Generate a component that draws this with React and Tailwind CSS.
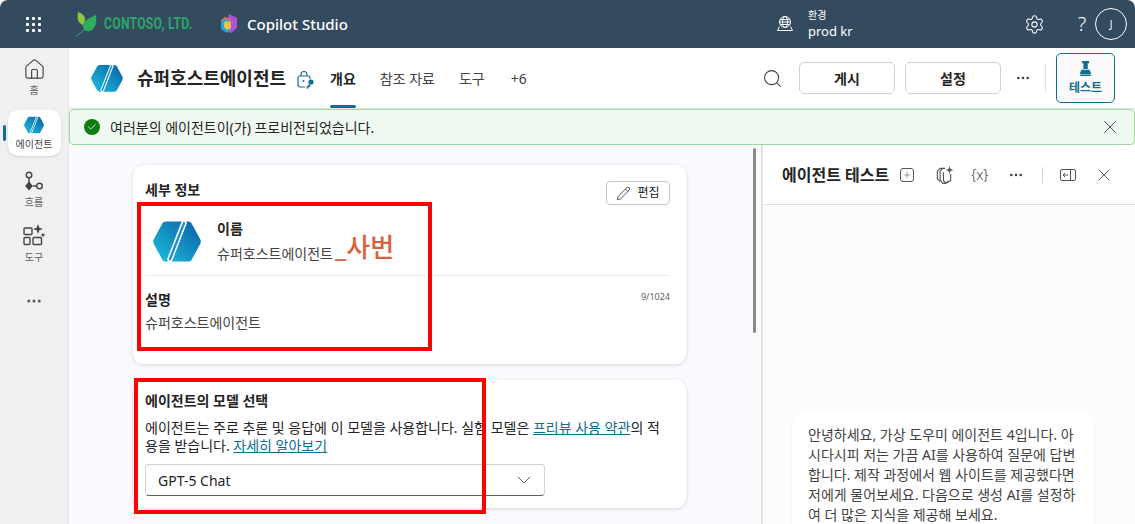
import React from 'react';
import { Home, Search, Settings, X, Plus, ChevronDown, Pencil, Check, MoreHorizontal } from 'lucide-react';

const fontStack = "font-['Noto_Sans','Noto_Sans_CJK_KR',sans-serif]";

const AgentLogo = ({ size = 32 }) => (
  <svg width={size} height={size * 0.9} viewBox="0 0 48 43">
    <defs>
      <linearGradient id="agentGrad" x1="0" y1="1" x2="1" y2="0">
        <stop offset="0" stopColor="#1cc0e0" />
        <stop offset="1" stopColor="#0a5fa6" />
      </linearGradient>
    </defs>
    <path d="M13 1.5h22c1.6 0 3 .8 3.8 2.2l8.4 15.5c.8 1.4.8 3.2 0 4.6l-8.4 15.5c-.8 1.4-2.2 2.2-3.8 2.2H13c-1.6 0-3-.8-3.8-2.2L.8 23.8c-.8-1.4-.8-3.2 0-4.6L9.2 3.7C10 2.3 11.4 1.5 13 1.5z" fill="url(#agentGrad)" />
    <path d="M31 3 17 39" stroke="#fff" strokeWidth="5.5" strokeLinecap="round" />
    <path d="M31 3 17 39" stroke="#1a8fc8" strokeWidth="2.4" strokeLinecap="round" />
  </svg>
);

const Leaf = () => (
  <svg width="22" height="25" viewBox="0 0 22 25">
    <path d="M2 8C1 5 2 2 2 0c3 1 7 3 7 7 0 2-1 4-2 6-3-1-4-3-5-5z" fill="#8dc63f" />
    <path d="M7 14C7 8 14 6 20 3c1 6 0 12-4 15-3 2-6 1-8 0z" fill="#2fae5f" />
    <path d="M0 24c4-2 9-7 14-13" stroke="#2fae5f" strokeWidth="1" fill="none" />
  </svg>
);

const CopilotLogo = () => (
  <svg width="18" height="20" viewBox="0 0 18 20">
    <path d="M9 0l8 4v10l-6 5-3-1V4z" fill="#b14fd6" />
    <path d="M5 3l6 2v9l-5 4-5-3V6z" fill="#f06a5a" />
    <path d="M1 7l6-2 4 3v7l-4 4-6-4z" fill="#1ea7e0" />
    <path d="M6 7l5 1v6l-4 2-3-3V9z" fill="#f3c23c" />
  </svg>
);

const FlowIcon = () => (
  <svg width="20" height="22" viewBox="0 0 20 22" fill="none" stroke="#444" strokeWidth="1.4">
    <circle cx="5" cy="4" r="2.8" />
    <path d="M5 7v5M9 15h4" />
    <path d="M5 11.5l3 3.5-3 3.5-3-3.5z" fill="#444" />
    <circle cx="15.5" cy="15" r="2.8" />
  </svg>
);

const ToolsIcon = () => (
  <svg width="23" height="25" viewBox="0 0 23 25" fill="none" stroke="#444" strokeWidth="1.4">
    <rect x="1" y="5" width="8" height="6.5" rx="1" />
    <rect x="1" y="14.5" width="6" height="7" rx="1" />
    <rect x="10" y="14.5" width="8.5" height="7" rx="1" />
    <path d="M15 1l1.3 3.7L20 6l-3.7 1.3L15 11l-1.3-3.7L10 6l3.7-1.3z" fill="#444" stroke="none" />
    <path d="M20 9.5l.7 1.8 1.8.7-1.8.7-.7 1.8-.7-1.8-1.8-.7 1.8-.7z" fill="#444" stroke="none" />
  </svg>
);

const EnvIcon = () => (
  <svg width="18" height="18" viewBox="0 0 18 18" fill="none" stroke="#fff" strokeWidth="1">
    <circle cx="9" cy="7" r="5.5" />
    <ellipse cx="9" cy="7" rx="2.5" ry="5.5" />
    <path d="M3.5 7h11M4.5 4.5h9M4.5 9.5h9" />
    <path d="M3.5 11.5L1.5 15.5h15l-2-4" />
  </svg>
);

const LockKey = () => (
  <svg width="18" height="20" viewBox="0 0 18 20" fill="none" stroke="#0f6c93" strokeWidth="1.2">
    <path d="M4 6V4.5a3 3 0 0 1 6 0V6" />
    <path d="M8 17H3a2 2 0 0 1-2-2V8a2 2 0 0 1 2-2h8a2 2 0 0 1 2 2v1" />
    <circle cx="6.5" cy="11" r="1" fill="#0f6c93" stroke="none" />
    <circle cx="14" cy="12" r="2.6" fill="#0f6c93" stroke="none" />
    <path d="M12.5 14l-3 3v1.5h2V17h1.2l1-1.5" fill="#0f6c93" stroke="none" />
  </svg>
);

const TestIcon = () => (
  <svg width="13" height="15" viewBox="0 0 14 17" fill="#0f6c93">
    <path d="M3 0h8v2.5H9.6V9h-5V2.5H3z" />
    <path d="M2.5 10h9l1.5 3v2H1v-2z" />
    <rect x="1" y="15.5" width="12" height="1.5" />
  </svg>
);

const ChatCopyIcon = () => (
  <svg width="20" height="20" viewBox="0 0 18 18" fill="none" stroke="#555" strokeWidth="1">
    <path d="M8 3H5.5L3 5.5v7L5.5 15" />
    <path d="M10 3H8L5.5 5.5v8L8 16.5h2l2.5-2" />
    <path d="M8.5 6.5V14l2 2.5 4.5-2.5V8" />
    <path d="M14 1l.9 2.6 2.6.9-2.6.9-.9 2.6-.9-2.6-2.6-.9 2.6-.9z" fill="#555" stroke="none" />
  </svg>
);

const PanelIcon = () => (
  <svg width="16" height="14" viewBox="0 0 16 14" fill="none" stroke="#555" strokeWidth="1">
    <rect x="0.5" y="1.5" width="15" height="11" rx="1.5" />
    <path d="M10.5 1.5v11M8 7H3M5 5L3 7l2 2" />
  </svg>
);

const NavItem = ({ icon, label }) => (
  <div className="flex flex-col items-center">
    {icon}
    <span className="text-[10px] leading-[14px] text-[#616161] mt-[2px]">{label}</span>
  </div>
);

const App = () => {
  return (
    <div className={`relative w-[1135px] h-[524px] overflow-hidden bg-white ${fontStack}`}>
      <div className="h-[48px] flex items-center text-white bg-[#344a5f] rounded-t-[8px] whitespace-nowrap">
        <div className="w-[67px] shrink-0 flex justify-center">
          <div className="grid grid-cols-3 gap-[3px]">
            {[0, 1, 2, 3, 4, 5, 6, 7, 8].map((i) => (
              <span key={i} className="w-[3px] h-[3px] bg-white rounded-[1px]" />
            ))}
          </div>
        </div>
        <div className="ml-[9px] shrink-0"><Leaf /></div>
        <div className="ml-[6px] w-[90px] shrink-0">
          <span className="block origin-left scale-x-[0.72] text-[17px] font-bold tracking-[0.3px] text-[#2aa76a] font-['Roboto',sans-serif]">CONTOSO, LTD.</span>
        </div>
        <div className="ml-[26px] shrink-0"><CopilotLogo /></div>
        <span className="ml-[9px] w-[103px] shrink-0 text-[15px] font-medium">Copilot Studio</span>
        <div className="ml-[426px] shrink-0"><EnvIcon /></div>
        <div className="ml-[14px] w-[60px] shrink-0 flex flex-col">
          <span className="text-[10px] leading-[14px]">환경</span>
          <span className="text-[13px] leading-[18px]">prod kr</span>
        </div>
        <Settings size={21} strokeWidth={1.2} className="ml-[156px] shrink-0" />
        <span className="ml-[30px] w-[14px] shrink-0 text-center text-[20px] font-light leading-none">?</span>
        <div className="ml-[6px] shrink-0 w-[32px] h-[32px] rounded-full border border-white flex items-center justify-center text-[10px]">J</div>
      </div>

      <div className="flex h-[476px] bg-white">
        <div className="w-[69px] shrink-0 bg-[#f0f0f0] border-r border-[#e3e3e3] flex flex-col items-center pt-[10px] relative">
          <NavItem icon={<Home size={23} strokeWidth={1.2} className="text-[#444]" />} label="홈" />
          <div className="mt-[13px] w-[53px] h-[46px] bg-white rounded-[10px] shadow-sm flex flex-col items-center justify-center">
            <AgentLogo size={20} />
            <span className="text-[10px] leading-[14px] text-[#424242] mt-[3px]">에이전트</span>
          </div>
          <span className="absolute left-[3px] top-[77px] w-[3px] h-[16px] rounded bg-[#0f6c93]" />
          <div className="mt-[15px]">
            <NavItem icon={<FlowIcon />} label="흐름" />
          </div>
          <div className="mt-[14px]">
            <NavItem icon={<ToolsIcon />} label="도구" />
          </div>
          <MoreHorizontal size={18} className="mt-[28px] text-[#555]" />
        </div>

        <div className="flex-1 flex flex-col min-w-0">
          <div className="h-[61px] shrink-0 flex items-center pl-[22px] pr-[20px] border-b border-[#e6e6e6] whitespace-nowrap">
            <AgentLogo size={32} />
            <span className="ml-[14px] text-[18px] font-semibold text-[#242424]">슈퍼호스트에이전트</span>
            <span className="ml-[11px] mt-[3px]"><LockKey /></span>
            <div className="ml-[15px] h-full flex items-center relative">
              <span className="text-[14px] font-bold text-[#242424]">개요</span>
              <span className="absolute left-0 right-0 bottom-0 h-[3px] rounded bg-[#0f6c93]" />
            </div>
            <span className="ml-[24px] text-[14px] text-[#424242]">참조 자료</span>
            <span className="ml-[24px] text-[14px] text-[#424242]">도구</span>
            <span className="ml-[26px] text-[14px] text-[#424242]">+6</span>
            <div className="ml-auto flex items-center">
              <Search size={21} strokeWidth={1.2} className="text-[#424242]" />
              <button className="ml-[16px] w-[96px] h-[32px] border border-[#d1d1d1] rounded-[5px] text-[14px] font-bold text-[#242424]">게시</button>
              <button className="ml-[10px] w-[96px] h-[32px] border border-[#d1d1d1] rounded-[5px] text-[14px] font-bold text-[#242424]">설정</button>
              <MoreHorizontal size={16} className="ml-[14px] text-[#424242]" />
              <span className="ml-[14px] w-px h-[28px] bg-[#e0e0e0]" />
              <button className="ml-[10px] w-[59px] h-[50px] border border-[#0f6c93] rounded-[5px] bg-[#fafafa] flex flex-col items-center justify-center">
                <TestIcon />
                <span className="text-[12px] leading-[15px] mt-[4px] font-bold text-[#0f6c93]">테스트</span>
              </button>
            </div>
          </div>

          <div className="h-[36px] shrink-0 flex items-center bg-[#f0f9f0] border border-[#9fd89f] rounded-[4px] pl-[14px] pr-[13px]">
            <span className="w-[16px] h-[16px] rounded-full bg-[#107c10] flex items-center justify-center">
              <Check size={10} strokeWidth={2} className="text-white" />
            </span>
            <span className="ml-[10px] text-[14px] text-[#242424]">여러분의 에이전트이(가) 프로비전되었습니다.</span>
            <X size={22} strokeWidth={1} className="ml-auto text-[#424242]" />
          </div>

          <div className="flex-1 flex min-h-0">
            <div className="w-[692px] shrink-0 bg-[#f9fafe] pl-[64px] pt-[20px] relative overflow-hidden">
              <div className="w-[553px] h-[199px] bg-white rounded-[10px] shadow-[0_1px_4px_rgba(0,0,0,0.14)] pl-[12px] pr-[16px] pt-[14px]">
                <div className="flex items-start justify-between">
                  <span className="text-[14px] leading-[22px] font-bold text-[#242424]">세부 정보</span>
                  <button className="w-[64px] h-[24px] border border-[#c8c8c8] rounded-[4px] flex items-center justify-center text-[12px] text-[#242424] mt-[2px]">
                    <Pencil size={15} strokeWidth={1.2} />
                    <span className="ml-[6px]">편집</span>
                  </button>
                </div>
                <div className="flex items-center h-[67px] border-b border-[#ececec] mt-[4px]">
                  <span className="ml-[8px]"><AgentLogo size={48} /></span>
                  <div className="ml-[16px] flex flex-col">
                    <span className="text-[14px] leading-[20px] font-bold text-[#242424]">이름</span>
                    <span className="text-[14px] leading-[22px] mt-[4px] text-[#424242]">슈퍼호스트에이전트</span>
                  </div>
                </div>
                <div className="flex justify-between pt-[14px]">
                  <span className="text-[14px] leading-[20px] font-bold text-[#242424]">설명</span>
                  <span className="text-[9px] text-[#616161]">9/1024</span>
                </div>
                <div className="text-[14px] leading-[20px] mt-[3px] text-[#424242]">슈퍼호스트에이전트</div>
              </div>

              <div className="w-[553px] h-[128px] mt-[16px] bg-white rounded-[10px] shadow-[0_1px_4px_rgba(0,0,0,0.14)] pl-[12px] pr-[16px] pt-[11px]">
                <div className="text-[14px] leading-[20px] font-bold text-[#242424]">에이전트의 모델 선택</div>
                <p className="mt-[8px] text-[14px] leading-[18px] text-[#242424]">
                  에이전트는 주로 추론 및 응답에 이 모델을 사용합니다. 실험 모델은 <a className="underline text-[#0f6c93]">프리뷰 사용 약관</a>의 적용을 받습니다. <a className="underline text-[#0f6c93]">자세히 알아보기</a>
                </p>
                <div className="mt-[9px] w-[400px] h-[32px] border border-[#d1d1d1] border-b-[#616161] rounded-[4px] flex items-center justify-between pl-[12px] pr-[8px]">
                  <span className="text-[14px] text-[#242424]">GPT-5 Chat</span>
                  <ChevronDown size={24} strokeWidth={1} className="text-[#616161]" />
                </div>
              </div>
              <span className="absolute right-[5px] top-[3px] w-[3px] h-[185px] rounded bg-[#8a8a8a]" />
            </div>

            <div className="flex-1 bg-white border-l-[2px] border-[#e3e3e3] flex flex-col min-w-0">
              <div className="h-[60px] shrink-0 flex items-center pl-[19px] border-b border-[#e0e0e0] text-[#424242] whitespace-nowrap">
                <span className="text-[16px] font-semibold text-[#242424]">에이전트 테스트</span>
                <span className="ml-[11px] w-[14px] h-[14px] border border-[#555] rounded-[3px] flex items-center justify-center">
                  <Plus size={10} strokeWidth={1.2} />
                </span>
                <span className="ml-[20px]"><ChatCopyIcon /></span>
                <span className="ml-[17px] text-[14px] font-light">{'{x}'}</span>
                <MoreHorizontal size={16} className="ml-[20px]" />
                <span className="ml-[18px] w-px h-[16px] bg-[#d6d6d6]" />
                <span className="ml-[17px]"><PanelIcon /></span>
                <X size={20} strokeWidth={1} className="ml-[18px]" />
              </div>
              <div className="flex-1 bg-[#fcfcfd] pl-[29px] pt-[208px] overflow-hidden">
                <div className="w-[302px] bg-white rounded-[10px] shadow-[0_1px_3px_rgba(0,0,0,0.08)] pl-[16px] pr-[12px] pt-[12px] pb-[10px] text-[14px] leading-[20px] text-[#424242]">
                  안녕하세요, 가상 도우미 에이전트 4입니다. 아시다시피 저는 가끔 AI를 사용하여 질문에 답변합니다. 제작 과정에서 웹 사이트를 제공했다면 저에게 물어보세요. 다음으로 생성 AI를 설정하여 더 많은 지식을 제공해 보세요.
                </div>
              </div>
            </div>
          </div>
        </div>
      </div>

      {/* red annotation boxes pasted over the screenshot */}
      <div className="absolute left-[137px] top-[202px] w-[295px] h-[149px] border-[4px] border-[#ff0000]" />
      <div className="absolute left-[134px] top-[378px] w-[352px] h-[136px] border-[4px] border-[#ff0000]" />
      <span className="absolute left-[335px] top-[231px] text-[26px] leading-[32px] font-medium text-[#d9603f]">_사번</span>
    </div>
  );
};

export default App;
